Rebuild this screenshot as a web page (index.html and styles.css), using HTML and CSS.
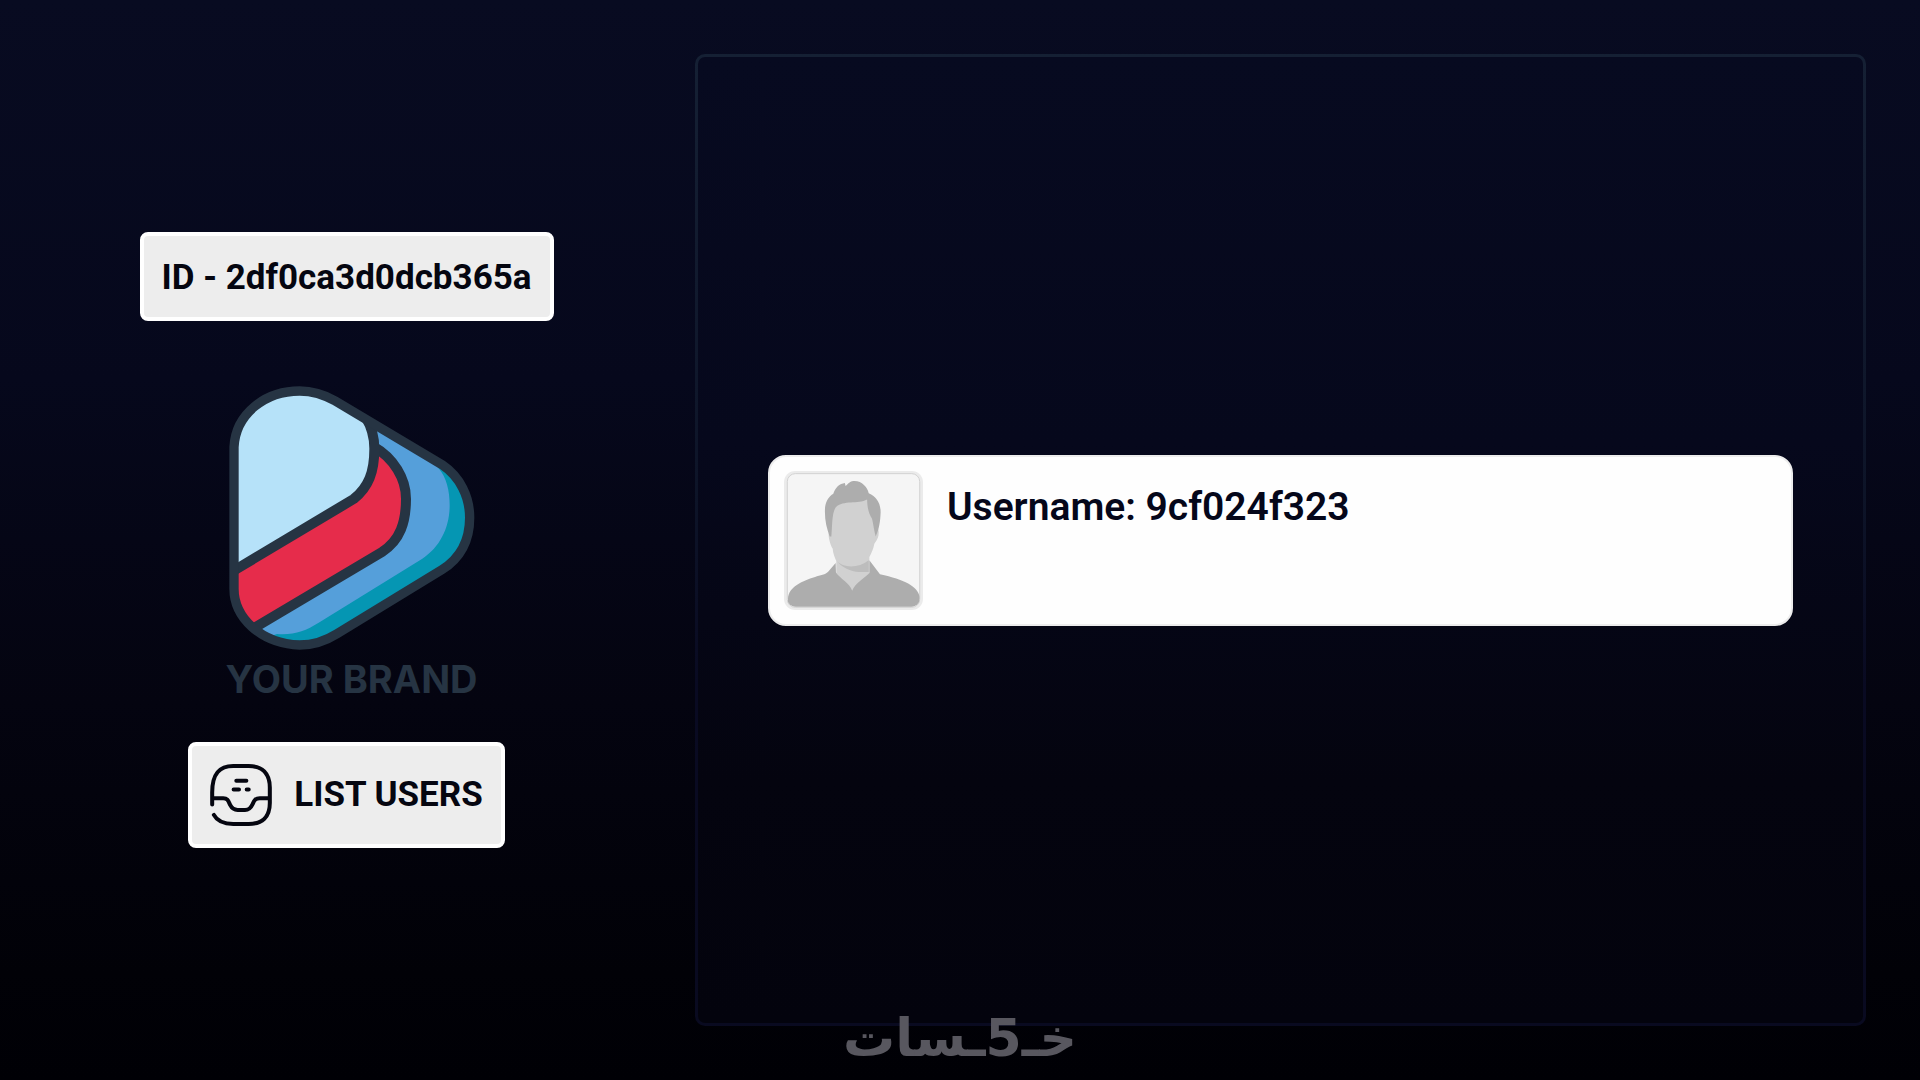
FILE: index.html
```html
<!DOCTYPE html>
<html lang="en">
<head>
<meta charset="utf-8">
<meta name="viewport" content="width=device-width, initial-scale=1">
<title>List users</title>
<link rel="stylesheet" href="styles.css">
</head>
<body>
<div class="screen">
  <aside class="side">
    <button class="btn btn-id" type="button">ID - 2df0ca3d0dcb365a</button>

    <div class="brand">
      <svg class="brand-mark" viewBox="57 52 736 792" aria-hidden="true">
        <defs>
          <clipPath id="shape">
            <path d="M71 660V235C76 135 165 67 268 67C315 67 345 80 375 97L695 288C750 325 778 385 778 447C778 515 750 568 695 603L380 795C345 817 310 829 268 829C150 825 71 745 71 660Z"/>
          </clipPath>
        </defs>
        <g clip-path="url(#shape)">
          <rect x="57" y="52" width="736" height="792" fill="#0596b3"/>
          <path fill="#559fda" d="M57 52H470L686 300C708 326 718 365 718 410C718 475 690 535 636 570L325 762C285 787 250 800 200 796L57 844Z"/>
          <path fill="#e62c4b" stroke="#263443" stroke-width="30" d="M30 840L145 770L515 550C570 515 587 460 587 390C587 330 550 268 490 234L30 200Z"/>
          <path fill="#b6e2f9" stroke="#263443" stroke-width="30" d="M40 624L430 391C475 355 492 310 492 240C492 210 486 178 466 146L400 40H40Z"/>
        </g>
        <path fill="none" stroke="#263443" stroke-width="28" d="M71 660V235C76 135 165 67 268 67C315 67 345 80 375 97L695 288C750 325 778 385 778 447C778 515 750 568 695 603L380 795C345 817 310 829 268 829C150 825 71 745 71 660Z"/>
      </svg>
      <span class="brand-name">YOUR BRAND</span>
    </div>

    <button class="btn btn-list" type="button">
      <svg class="btn-icon" viewBox="116 115 184 185" aria-hidden="true">
        <g fill="none" stroke="#050610" stroke-width="12" stroke-linecap="round">
          <path d="M122 236V200C122 142 145 121 185 121H231C271 121 294 142 294 185V231C294 273 271 294 231 294H185C158 294 138 288 127 267"/>
          <path stroke-linecap="butt" d="M122 217H155C168 217 170 225 176 238C182 250 188 252 198 252H220C232 252 237 247 243 234C248 222 252 217 264 217H294"/>
          <path d="M194 165H224M186 191H202M225 191H231"/>
        </g>
      </svg>
      LIST USERS
    </button>
  </aside>

  <main class="panel">
    <article class="card">
      <svg class="avatar" viewBox="36 30 420 420" role="img" aria-label="User photo">
        <defs><clipPath id="frame"><rect x="46" y="38" width="400" height="402" rx="24"/></clipPath></defs>
        <rect x="36" y="30" width="420" height="420" rx="34" fill="#ebebeb"/>
        <rect x="46" y="38" width="400" height="404" rx="24" fill="#f5f5f5" stroke="#d2d2d2" stroke-width="3"/>
        <g clip-path="url(#frame)">
          <path fill="#d1d1d1" d="M172 215C168 225 176 255 183 264C184 280 190 292 194 302V345L242 405L294 340V290C302 275 306 265 309 250C320 235 323 225 322 212L300 110H190Z"/>
          <path fill="#bdbdbd" d="M194 300C215 325 260 325 292 300V335H262C238 335 210 322 194 300Z"/>
          <path fill="#adadad" d="M174 228C164 200 158 175 160 140C163 120 172 107 185 99C190 80 204 68 220 66L222 75C230 70 232 62 246 60C270 58 288 78 292 97C315 108 328 125 328 155C327 182 324 205 313 228C308 210 306 190 302 174C292 160 288 142 287 116C260 132 215 116 192 140C180 158 182 200 179 228Z"/>
          <path fill="#adadad" d="M192 308L170 334C162 343 145 346 130 350C90 362 50 380 48 415V450H446V410C440 378 400 358 326 342L294 300L294 338C285 350 250 368 242 392C235 370 205 355 193 337Z"/>
        </g>
      </svg>
      <h2 class="username">Username: 9cf024f323</h2>
    </article>
  </main>
</div>

<div class="watermark" lang="ar" dir="rtl"><span>خـ</span><span>5</span><span>ـسات</span></div>
</body>
</html>
```
FILE: styles.css
```css
* {
  box-sizing: border-box;
}

body {
  margin: 0;
  font-family: Roboto, "Liberation Sans", sans-serif;
  color: #050610;
  background: linear-gradient(#080b21, #06081c 35%, #040410 65%, #010107 90%, #000005) fixed;
}

.screen {
  display: grid;
  grid-template-columns: 13fr 22fr;
  min-height: 100vh;
  padding: 54px 54px 54px 0;
}

.side {
  display: flex;
  flex-direction: column;
  align-items: center;
  justify-content: center;
}

.btn {
  display: flex;
  align-items: center;
  gap: 22px;
  padding: 18px;
  border: 4px solid #fff;
  border-radius: 8px;
  background: #ededed;
  color: inherit;
  font: 700 35px/40px Roboto, "Liberation Sans", sans-serif;
}

.btn-id {
  padding: 22px 18px 19px;
}

.btn-icon {
  width: 62px;
  height: 62px;
}

.brand {
  display: flex;
  flex-direction: column;
  align-items: center;
  margin: 65px 0 40px 10px;
}

.brand-mark {
  width: 246px;
  height: 264px;
}

.brand-name {
  margin-top: 6px;
  color: #263443;
  font: 700 38px/46px Inter, "Open Sans", sans-serif;
}

.panel {
  display: flex;
  align-items: center;
  justify-content: center;
  margin-left: 2px;
  border: 3px solid transparent;
  border-radius: 10px;
  background:
    linear-gradient(#070a20, #06081c 40%, #04040f 75%, #03030d) padding-box,
    linear-gradient(#152034, #0d1428 45%, #090a22 65%, #090a20) border-box;
}

.card {
  display: flex;
  align-items: flex-start;
  gap: 24px;
  width: 88%;
  padding: 14px;
  border: 2px solid #ededed;
  border-radius: 18px;
  background: #fefefe;
}

.avatar {
  flex: none;
  width: 139px;
  height: 139px;
}

.username {
  margin: 13px 0 0;
  color: #05071a;
  font-size: 39px;
  line-height: 46px;
  font-weight: 600;
}

.watermark {
  position: fixed;
  bottom: 10px;
  left: 50%;
  transform: translateX(-50%);
  display: flex;
  align-items: baseline;
  color: #58575f;
  font: 700 52px/64px "DejaVu Sans", sans-serif;
  white-space: nowrap;
  pointer-events: none;
}
```
